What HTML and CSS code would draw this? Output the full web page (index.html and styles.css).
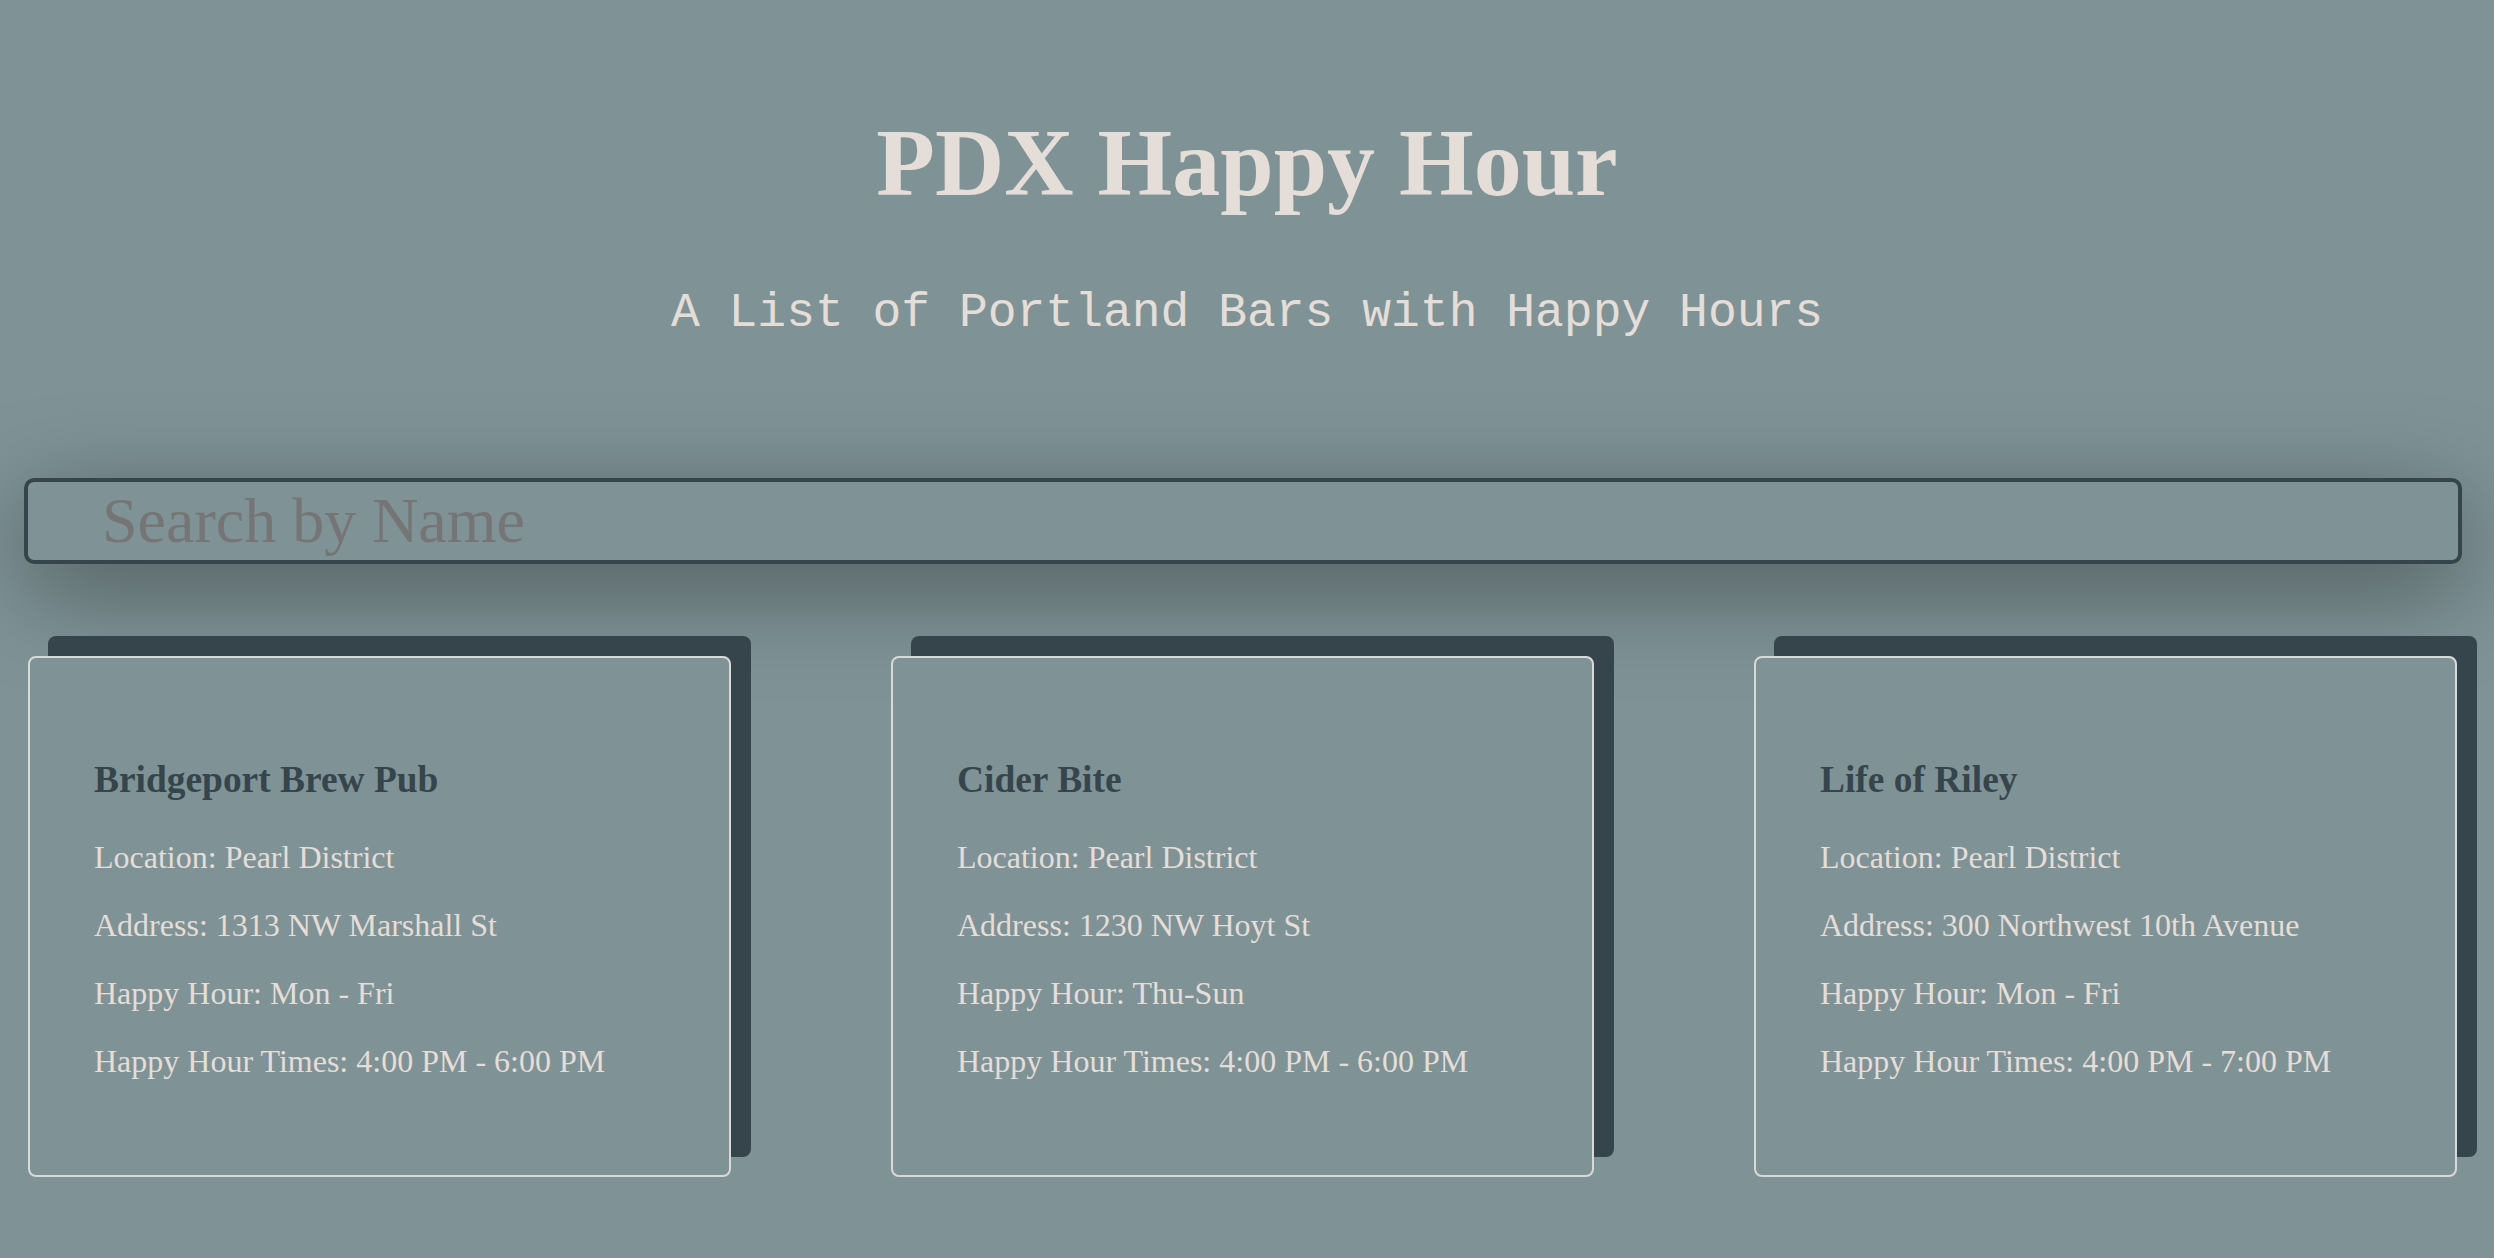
FILE: index.html
```html
<!DOCTYPE html>
<html lang="en">
<head>
<meta charset="utf-8">
<title>PDX Happy Hour</title>
<link rel="stylesheet" href="styles.css">
</head>
<body>
  <header class="masthead">
    <h1 class="title">PDX Happy Hour</h1>
    <h2 class="subtitle">A List of Portland Bars with Happy Hours</h2>
  </header>
  <div class="search">
    <input class="search-input" type="text" placeholder="Search by Name">
  </div>
  <main class="bars">
    <section class="bar-card">
      <h3 class="bar-name">Bridgeport Brew Pub</h3>
      <p>Location: Pearl District</p>
      <p>Address: 1313 NW Marshall St</p>
      <p>Happy Hour: Mon - Fri</p>
      <p>Happy Hour Times: 4:00 PM - 6:00 PM</p>
    </section>
    <section class="bar-card">
      <h3 class="bar-name">Cider Bite</h3>
      <p>Location: Pearl District</p>
      <p>Address: 1230 NW Hoyt St</p>
      <p>Happy Hour: Thu-Sun</p>
      <p>Happy Hour Times: 4:00 PM - 6:00 PM</p>
    </section>
    <section class="bar-card">
      <h3 class="bar-name">Life of Riley</h3>
      <p>Location: Pearl District</p>
      <p>Address: 300 Northwest 10th Avenue</p>
      <p>Happy Hour: Mon - Fri</p>
      <p>Happy Hour Times: 4:00 PM - 7:00 PM</p>
    </section>
  </main>
</body>
</html>
```

FILE: styles.css
```css
html, body {
  margin: 0;
  padding: 0;
}

body {
  background: #7f9396;
  color: #e5ddd8;
  font-family: "Liberation Serif", "Times New Roman", serif;
  font-size: 32px;
  min-height: 100vh;
}

.masthead {
  text-align: center;
  padding-top: 43px;
}

.title {
  font-size: 96px;
  font-weight: bold;
  margin: 64px 0 68px;
  color: #e5ddd8;
}

.subtitle {
  font-family: "Liberation Mono", "Courier New", monospace;
  font-size: 48px;
  font-weight: normal;
  margin: 0 0 40px;
  color: #e5ddd8;
}

.search {
  padding: 98px 32px 0 24px;
}

.search-input {
  display: block;
  box-sizing: border-box;
  width: 100%;
  height: 86px;
  margin: 0;
  padding: 0 0 0 74px;
  border: 4px solid #36454b;
  border-radius: 10px;
  background: transparent;
  font-family: "Liberation Serif", "Times New Roman", serif;
  font-size: 64px;
  color: #36454b;
  box-shadow: 0 24px 100px rgba(0, 0, 0, 0.4);
  outline: none;
}

.search-input::placeholder {
  color: #757575;
}

.bars {
  display: grid;
  grid-template-columns: repeat(3, 703px);
  column-gap: 160px;
  padding: 92px 0 40px 28px;
}

.bar-card {
  border: 2px solid #d9d9d9;
  border-radius: 8px;
  padding: 64px;
  background: #7f9396;
  box-shadow: 20px -20px 0 0 #36454b;
  line-height: 36px;
}

.bar-name {
  color: #36454b;
  font-size: 1.17em;
  font-weight: bold;
  line-height: 42px;
  margin: 1em 0;
}

.bar-card p {
  margin: 1em 0;
}
```
